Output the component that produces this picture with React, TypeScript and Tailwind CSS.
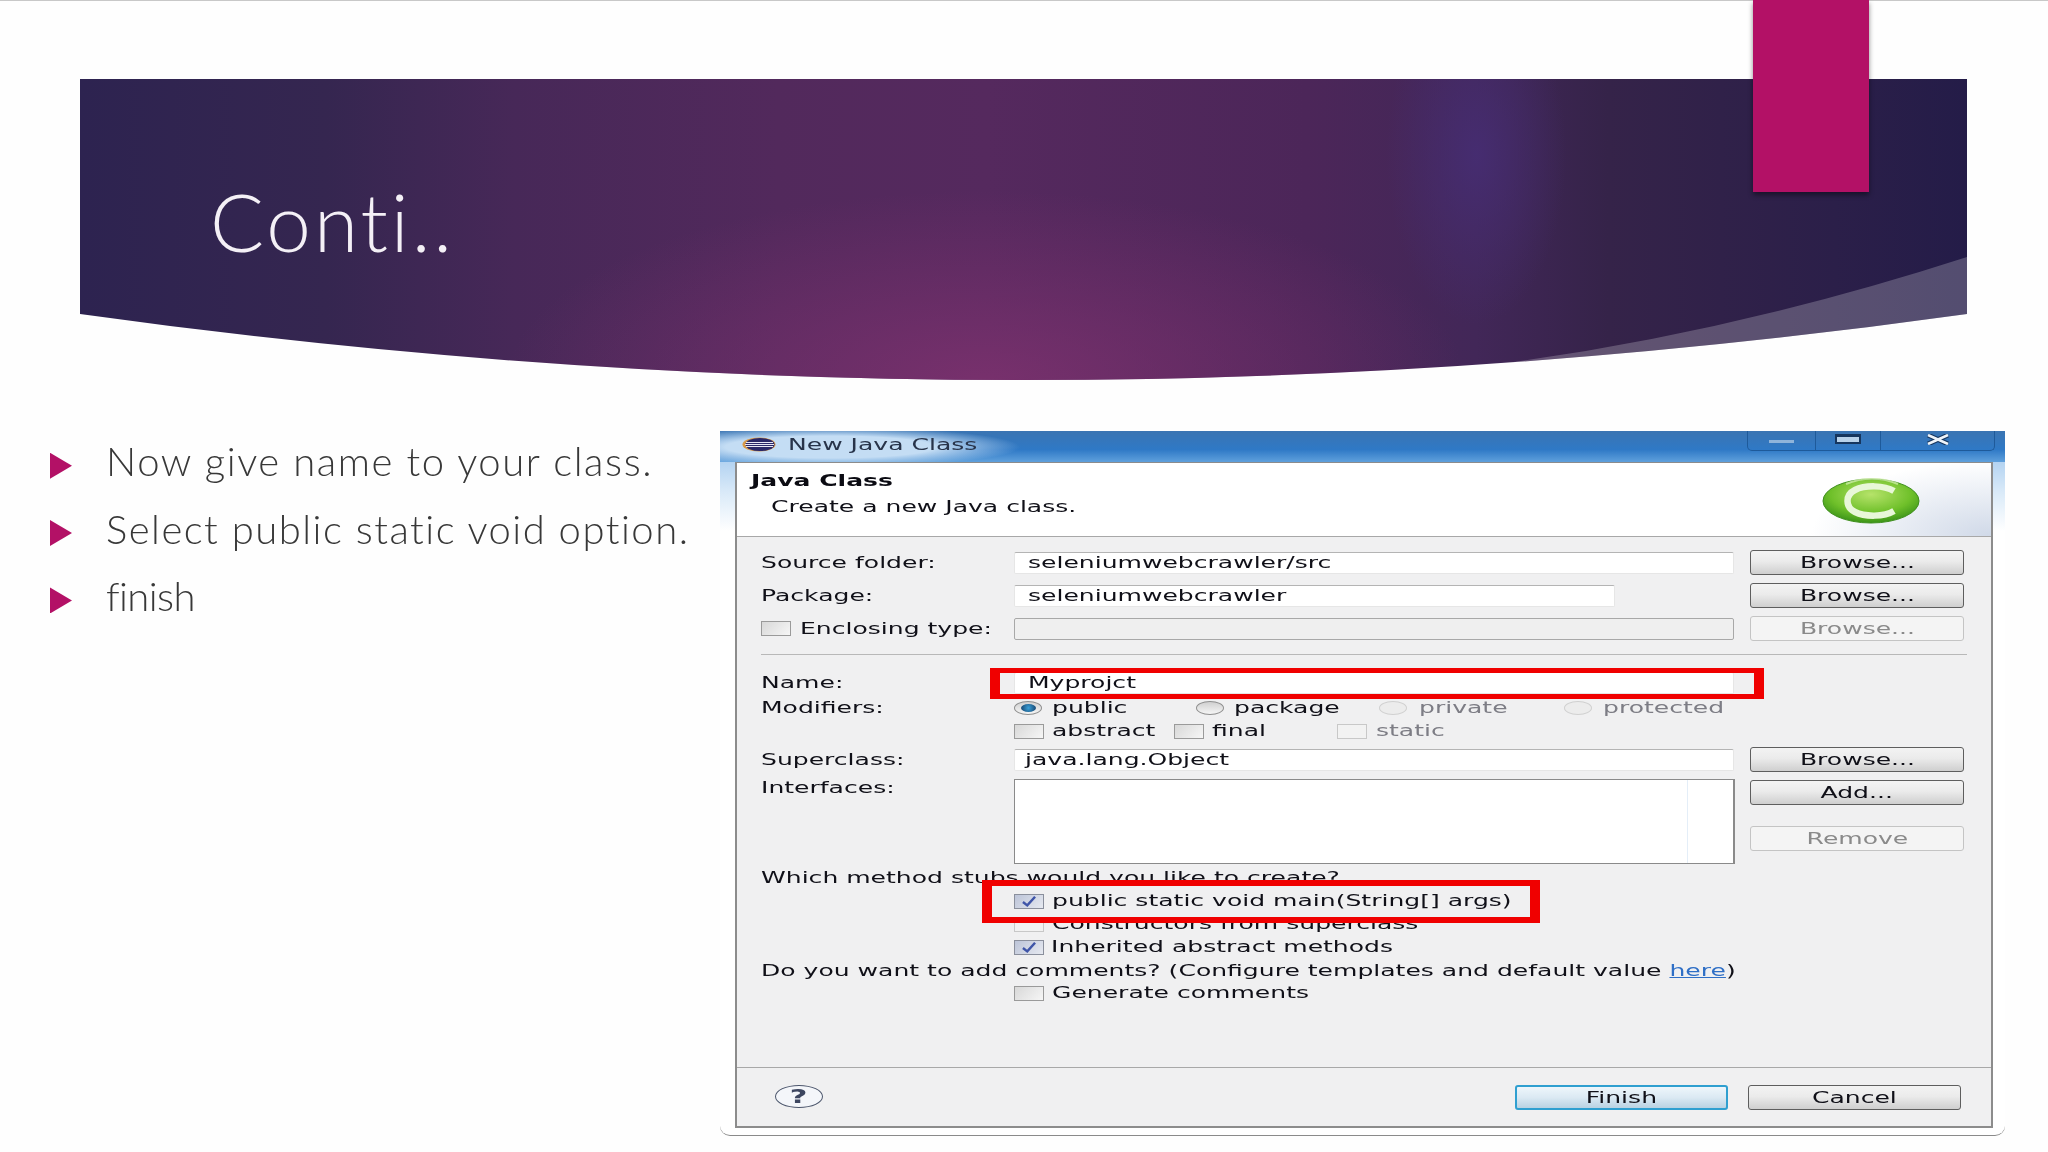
import React from "react";

function T({ children, className = "", center = false }: { children: React.ReactNode; className?: string; center?: boolean }) {
  return (
    <span
      className={`inline-block whitespace-nowrap scale-x-[1.67] text-[15px] leading-[18px] ${center ? "origin-center" : "origin-left"} ${className || "text-[#101018]"}`}
    >
      {children}
    </span>
  );
}

function Label({ children }: { children: React.ReactNode }) {
  return <div className="flex w-[253px] shrink-0"><T>{children}</T></div>;
}

function Btn({ label, disabled = false, primary = false, className = "w-full" }: { label: string; disabled?: boolean; primary?: boolean; className?: string }) {
  const look = primary
    ? "border-2 border-[#2f9fd0] bg-[linear-gradient(180deg,#eef6fb_0%,#dbe9f3_50%,#b9d2e2_100%)]"
    : disabled
      ? "border-[1.5px] border-[#c4c4c4] bg-[#f4f4f4]"
      : "border-[1.5px] border-[#5e5e5e] bg-[linear-gradient(180deg,#f3f3f3_0%,#ebebeb_45%,#cfcfcf_100%)]";
  return (
    <div className={`flex h-[25px] items-center justify-center rounded-[3px] ${look} ${className}`}>
      <T center className={disabled ? "text-[#8a8a8a]" : "text-[#101018]"}>
        {label}
      </T>
    </div>
  );
}

function Input({ text, className = "w-[720px]", disabled = false, pad = "pl-[13px]" }: { text?: string; className?: string; disabled?: boolean; pad?: string }) {
  return (
    <div
      className={`flex h-[22px] items-center rounded-[2px] border ${pad} ${className} ${disabled ? "border-[#a8a8a8] bg-[#efefef]" : "border-[#e6e6e6] border-t-[#b4b4b4] bg-white"}`}
    >
      {text ? <T>{text}</T> : null}
    </div>
  );
}

function Check({ checked = false, faded = false }: { checked?: boolean; faded?: boolean }) {
  const look = checked
    ? "border-[#8a8f9c] bg-[linear-gradient(135deg,#bcc4d8,#e6e9f0)]"
    : faded
      ? "border-[#c8c8c8] bg-[#f2f2f2]"
      : "border-[#9a9a9a] bg-[linear-gradient(135deg,#d8d8d8,#f6f6f6)]";
  return (
    <div className={`flex h-[15px] w-[30px] shrink-0 items-center justify-center border-[1.5px] ${look}`}>
      {checked ? (
        <svg viewBox="0 0 30 15" className="h-[13px] w-[28px]">
          <path d="M8 8 L13 12 L22 2" fill="none" stroke="#3f55a8" strokeWidth="2.8" />
        </svg>
      ) : null}
    </div>
  );
}

function Radio({ on = false, faded = false }: { on?: boolean; faded?: boolean }) {
  return (
    <div
      className={`flex h-[14px] w-[28px] shrink-0 items-center justify-center rounded-[50%] border ${faded ? "border-[#d0d0d0] bg-[#ececec]" : "border-[#8f8f8f] bg-[linear-gradient(180deg,#d0d0d0,#f6f6f6)]"}`}
    >
      {on ? <div className="h-[8px] w-[15px] rounded-[50%] bg-[radial-gradient(circle,#3aa0d8,#123c66)]" /> : null}
    </div>
  );
}

function Row({ className = "", children }: { className?: string; children: React.ReactNode }) {
  return <div className={`flex ${className}`}>{children}</div>;
}

function CheckLine({ label, checked = false, faded = false, mt, gap = "gap-[8px]" }: { label: string; checked?: boolean; faded?: boolean; mt: string; gap?: string }) {
  return (
    <div className={`ml-[253px] flex h-[18px] items-center ${gap} ${mt}`}>
      <Check checked={checked} faded={faded} />
      <T>{label}</T>
    </div>
  );
}

function GreenC() {
  return (
    <svg viewBox="0 0 98 46" className="mt-[15px] h-[46px] w-[98px] shrink-0">
      <defs>
        <radialGradient id="gc" cx="50%" cy="35%" r="70%">
          <stop offset="0%" stopColor="#b6e36a" />
          <stop offset="60%" stopColor="#6fc02a" />
          <stop offset="100%" stopColor="#2f8a14" />
        </radialGradient>
      </defs>
      <ellipse cx="49" cy="23" rx="48" ry="22" fill="url(#gc)" stroke="#3f8f1e" strokeWidth="1" />
      <path
        d="M72 13 C62 7 43 7 33 12 C23 17 23 29 33 34 C43 39 62 39 72 33"
        fill="none"
        stroke="#e8f7d8"
        strokeWidth="6.5"
      />
      <path d="M24 6 C40 -1 60 -1 76 6" fill="none" stroke="#d9f2b4" strokeWidth="2" opacity="0.7" />
    </svg>
  );
}

function EclipseIcon() {
  return (
    <svg viewBox="0 0 34 15" className="h-[15px] w-[34px] shrink-0">
      <ellipse cx="17" cy="7.5" rx="16.5" ry="7" fill="#d89a4a" />
      <ellipse cx="18" cy="7.5" rx="14.5" ry="6.6" fill="#2a2868" />
      <path d="M4 5.5H31M3 7.5H32M4 9.5H31" stroke="#e6e6f4" strokeWidth="1.2" />
    </svg>
  );
}

function HelpIcon() {
  return (
    <div className="flex h-[23px] w-[48px] items-center justify-center rounded-[50%] border-[1.5px] border-[#4c566c] bg-[#f4f6fa]">
      <span className="origin-center scale-x-[1.6] text-[19px] font-bold leading-none text-[#3d4660]">?</span>
    </div>
  );
}

function WindowControls() {
  return (
    <div className="mr-[10px] flex h-[20px] rounded-b-[5px] border border-t-0 border-[#1e5a9a]">
      <div className="flex w-[68px] items-center justify-center border-r border-[#1e5a9a]">
        <div className="mt-[2px] h-[3px] w-[25px] bg-[#8fb4da]" />
      </div>
      <div className="flex w-[65px] items-center justify-center border-r border-[#1e5a9a]">
        <div className="mb-[3px] h-[10px] w-[26px] border-2 border-t-[3px] border-[#16365e] bg-[#b8d2ea]" />
      </div>
      <div className="flex w-[113px] items-center justify-center">
        <svg viewBox="0 0 26 11" className="mb-[3px] h-[11px] w-[26px]">
          <path d="M3 1 L23 10 M23 1 L3 10" stroke="#16365e" strokeWidth="4.8" />
          <path d="M3 1 L23 10 M23 1 L3 10" stroke="#eef4fa" strokeWidth="2.6" />
        </svg>
      </div>
    </div>
  );
}

function JavaDialog() {
  return (
    <div className="relative flex h-[705px] w-[1285px] shrink-0 flex-col overflow-hidden rounded-b-[10px] border-b border-[#8a8a8a] bg-[linear-gradient(180deg,#8dbcea_0px,#d8e9f8_60px,#ffffff_100px)] blur-[0.6px]">
      <div className="flex h-[31px] shrink-0 items-start justify-between bg-[radial-gradient(ellipse_190px_20px_at_110px_16px,#c4ddf4_55%,rgba(196,221,244,0)),linear-gradient(180deg,#3a74b2_0px,#2f79c6_60%,#5fa0dc_100%)]">
        <div className="flex h-[27px] items-center gap-[12px] pl-[22px]">
          <EclipseIcon />
          <T className="text-[#28344a]">New Java Class</T>
        </div>
        <WindowControls />
      </div>

      <div className="ml-[15px] mr-[12px] flex h-[666px] flex-col border-x-2 border-b-2 border-t border-[#8c8c8c] bg-[#f0f0f1]">
        <div className="flex h-[74px] shrink-0 justify-between border-b border-[#a8a8a8] bg-[radial-gradient(ellipse_180px_75px_at_100%_100%,#d0d9e8,rgba(255,255,255,0)),linear-gradient(#ffffff,#ffffff)] pl-[14px] pr-[71px]">
          <div className="flex flex-col">
            <T className="mt-[9px] font-bold text-[#0b0b12]">Java Class</T>
            <T className="ml-[20px] mt-[8px] text-[#101018]">Create a new Java class.</T>
          </div>
          <GreenC />
        </div>

        <div className="flex flex-1 flex-col pl-[24px]">
          <Row className="mt-[13px] h-[25px] items-center">
            <Label>Source folder:</Label>
            <Input text="seleniumwebcrawler/src" />
            <div className="ml-[16px] w-[214px]"><Btn label="Browse..." /></div>
          </Row>
          <Row className="mt-[8px] h-[25px] items-center">
            <Label>Package:</Label>
            <div className="w-[720px]"><Input text="seleniumwebcrawler" className="w-[601px]" /></div>
            <div className="ml-[16px] w-[214px]"><Btn label="Browse..." /></div>
          </Row>
          <Row className="mt-[8px] h-[25px] items-center">
            <div className="flex w-[253px] shrink-0 items-center gap-[9px]">
              <Check />
              <T>Enclosing type:</T>
            </div>
            <Input disabled />
            <div className="ml-[16px] w-[214px]"><Btn label="Browse..." disabled /></div>
          </Row>
          <div className="mr-[24px] mt-[13px] h-px shrink-0 bg-[#b8b8b8]" />
          <Row className="mt-[17px] h-[22px] items-center">
            <Label>Name:</Label>
            <Input text="Myprojct" />
          </Row>
          <Row className="mt-[5px] h-[18px] items-center">
            <Label>Modifiers:</Label>
            <div className="flex w-[182px] items-center gap-[10px]"><Radio on /><T>public</T></div>
            <div className="flex w-[183px] items-center gap-[10px]"><Radio /><T>package</T></div>
            <div className="flex w-[185px] items-center gap-[12px]"><Radio faded /><T className="text-[#7d7d85]">private</T></div>
            <div className="flex items-center gap-[11px]"><Radio faded /><T className="text-[#7d7d85]">protected</T></div>
          </Row>
          <Row className="ml-[253px] mt-[5px] h-[18px] items-center">
            <div className="flex w-[160px] items-center gap-[8px]"><Check /><T>abstract</T></div>
            <div className="flex w-[163px] items-center gap-[8px]"><Check /><T>final</T></div>
            <div className="flex items-center gap-[9px]"><Check faded /><T className="text-[#7d7d85]">static</T></div>
          </Row>
          <Row className="mt-[7px] h-[25px] items-center">
            <Label>Superclass:</Label>
            <Input text="java.lang.Object" pad="pl-[10px]" />
            <div className="ml-[16px] w-[214px]"><Btn label="Browse..." /></div>
          </Row>
          <Row className="mt-[7px] h-[85px] items-start">
            <Label>Interfaces:</Label>
            <div className="flex h-[85px] w-[721px] justify-end border-[1.5px] border-r-2 border-[#8a8a8a] bg-white">
              <div className="mr-[45px] h-full w-px bg-[#e4eef8]" />
            </div>
            <div className="ml-[15px] flex w-[214px] flex-col gap-[21px] pt-px">
              <Btn label="Add..." />
              <Btn label="Remove" disabled />
            </div>
          </Row>
          <div className="mt-[5px] flex h-[18px]"><T>Which method stubs would you like to create?</T></div>
          <CheckLine mt="mt-[5px]" label="public static void main(String[] args)" checked />
          <CheckLine mt="mt-[5px]" label="Constructors from superclass" faded />
          <CheckLine mt="mt-[5px]" label="Inherited abstract methods" checked gap="gap-[7px]" />
          <div className="mt-[6px] flex h-[18px]">
            <T>
              Do you want to add comments? (Configure templates and default value{" "}
              <span className="text-[#2f6fc6] underline">here</span>)
            </T>
          </div>
          <CheckLine mt="mt-[4px]" label="Generate comments" />
        </div>

        <div className="flex h-[59px] shrink-0 items-start justify-between border-t border-[#a8a8a8] pl-[38px] pr-[30px] pt-[17px]">
          <HelpIcon />
          <div className="flex gap-[20px]">
            <Btn label="Finish" primary className="w-[213px]" />
            <Btn label="Cancel" className="w-[213px]" />
          </div>
        </div>
      </div>

      <div className="absolute left-[270px] top-[237px] h-[31px] w-[774px] border-x-[10px] border-y-[5px] border-[#f00000]" />
      <div className="absolute left-[262px] top-[449px] h-[43px] w-[558px] border-x-[10px] border-y-[6px] border-[#f00000]" />
    </div>
  );
}

const bullets = [
  { text: "Now give name to your class.", track: "tracking-[1.6px]" },
  { text: "Select public static void option.", track: "tracking-[1.5px]" },
  { text: "finish", track: "tracking-[-0.6px] [font-variant-ligatures:none]" },
];

export default function App() {
  return (
    <div className="relative h-[1152px] w-[2048px] overflow-hidden bg-[#fefefe] [font-family:'DejaVu_Sans',sans-serif]">
      <div className="h-px bg-[#c8c8c8]" />

      <div className="relative ml-[80px] mt-[78px] h-[302px] w-[1887px] bg-[radial-gradient(ellipse_480px_190px_at_48%_100%,rgba(128,50,112,0.8),rgba(128,50,112,0)),radial-gradient(ellipse_90px_170px_at_74%_25%,rgba(70,45,115,0.9),rgba(70,45,115,0)),linear-gradient(90deg,#2d2350_0%,#352650_13%,#472858_23%,#52295c_37%,#55295e_48%,#4c2659_65%,#422758_74%,#352349_81%,#2b1f49_93%,#241c48_100%)] [clip-path:path('M0_0H1887V235Q943.5_367_0_235Z')]">
        <svg viewBox="0 0 1887 302" className="absolute inset-0 h-full w-full">
          <path d="M1887 178 Q1640 258 1396 288 L1396 320 L1887 320 Z" fill="#ffffff" opacity="0.22" />
        </svg>
        <div className="relative pl-[130px] pt-[102px] text-[80px] font-light leading-[80px] tracking-[3px] text-[#f4f0f6] [font-family:Lato,sans-serif]">
          Conti..
        </div>
      </div>

      <div className="absolute left-[1753px] top-0 h-[192px] w-[116px] bg-[#b31166] shadow-[0_3px_5px_rgba(0,0,0,0.45)]" />

      <div className="mt-[50px] flex">
        <ul className="-mt-[3px] w-[720px] shrink-0 pl-[50px] blur-[0.3px]">
          {bullets.map((b) => (
            <li key={b.text} className="flex h-[67.4px] items-center gap-[34px]">
              <div className="mt-[8px] h-[26px] w-[22px] shrink-0 bg-[#b31166] [clip-path:polygon(0_0,100%_50%,0_100%)]" />
              <span className={`whitespace-nowrap text-[40px] font-light leading-[67px] text-[#383838] [font-family:Lato,sans-serif] ${b.track}`}>
                {b.text}
              </span>
            </li>
          ))}
        </ul>
        <JavaDialog />
      </div>
    </div>
  );
}
